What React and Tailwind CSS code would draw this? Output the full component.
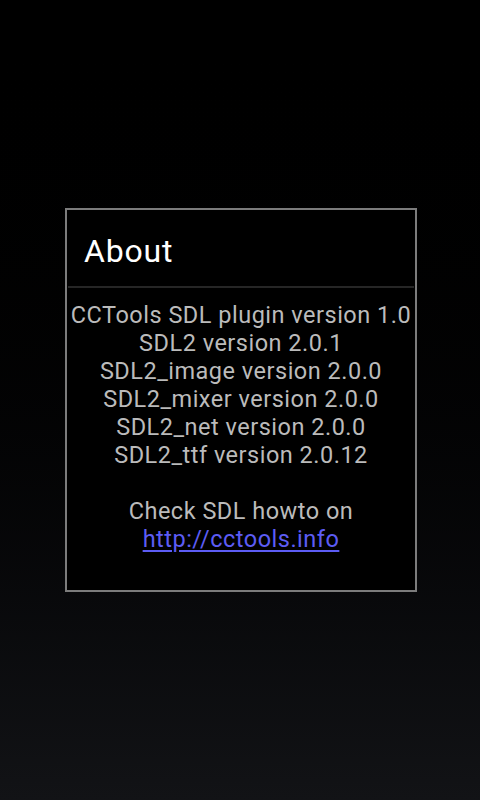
import React from 'react'

const lines = [
  'CCTools SDL plugin version 1.0',
  'SDL2 version 2.0.1',
  'SDL2_image version 2.0.0',
  'SDL2_mixer version 2.0.0',
  'SDL2_net version 2.0.0',
  'SDL2_ttf version 2.0.12',
]

export default function App() {
  return (
    <div
      className="w-[480px] h-[800px] flex items-center justify-center bg-gradient-to-b from-[#000000] to-[#121316]"
      style={{ fontFamily: 'Roboto, "Noto Sans", sans-serif' }}
    >
      <div className="ml-[2px] w-[352px] h-[384px] border-2 border-[#7c7c7c] bg-black flex flex-col">
        {/* Title */}
        <div className="h-[78px] flex items-center pl-4 pt-[6px] border-b-2 border-[#262626] mx-px">
          <span className="text-[32px] tracking-[0.8px] text-white leading-none">About</span>
        </div>

        {/* Body */}
        <div className="flex flex-col items-center pt-[13px] text-[23.5px] tracking-[0.5px] leading-[28px] text-[#bbbbbb] text-center">
          {lines.map((l) => (
            <div key={l} className="whitespace-nowrap">{l}</div>
          ))}
          <div className="h-[28px]" />
          <div>Check SDL howto on</div>
          <a href="#" className="text-[#5c5cf4] underline underline-offset-[3px]">http://cctools.info</a>
        </div>
      </div>
    </div>
  )
}
